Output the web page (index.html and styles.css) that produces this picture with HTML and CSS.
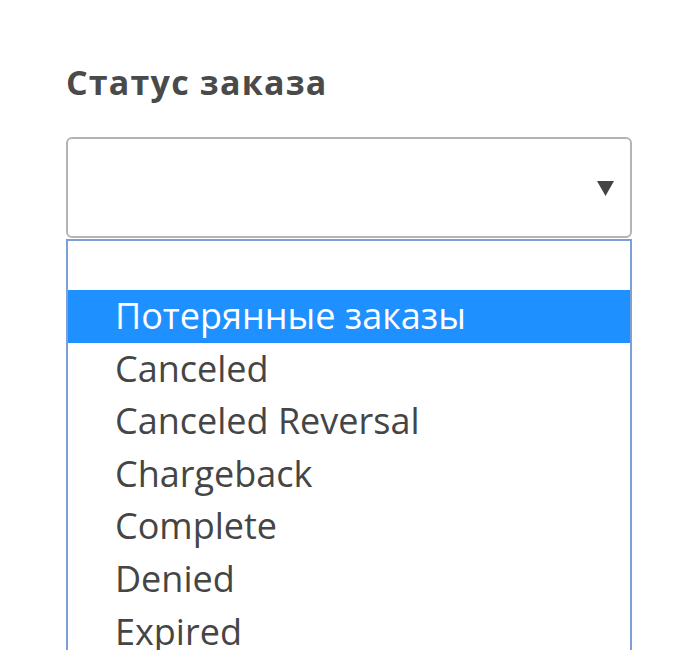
FILE: index.html
```html
<!DOCTYPE html>
<html lang="ru">
<head>
<meta charset="utf-8">
<title>Статус заказа</title>
<link rel="stylesheet" href="styles.css">
</head>
<body>
<div class="field">
  <div class="label">Статус заказа</div>
  <div class="select">
    <svg class="arrow" width="17" height="15" viewBox="0 0 17 15"><polygon points="0,0 17,0 8.5,15" fill="#444"/></svg>
  </div>
  <ul class="list">
    <li class="opt empty"></li>
    <li class="opt active">Потерянные заказы</li>
    <li class="opt">Canceled</li>
    <li class="opt">Canceled Reversal</li>
    <li class="opt">Chargeback</li>
    <li class="opt">Complete</li>
    <li class="opt">Denied</li>
    <li class="opt">Expired</li>
  </ul>
</div>
</body>
</html>
```
FILE: styles.css
```css
html, body {
  margin: 0;
  padding: 0;
  background: #fff;
  height: 650px;
  overflow: hidden;
}
.field {
  padding: 64px 0 0 66px;
  width: 566px;
}
.label {
  font-family: "Open Sans", sans-serif;
  font-weight: 700;
  font-size: 34px;
  letter-spacing: 1.2px;
  line-height: 36px;
  color: #4a4a4a;
}
.select {
  margin-top: 37px;
  height: 97px;
  border: 2px solid #b4b4b4;
  border-radius: 6px;
  display: flex;
  align-items: center;
  justify-content: flex-end;
  padding-right: 16px;
  background: #fff;
}
.arrow {
  display: block;
  margin-top: 2px;
}
.list {
  list-style: none;
  margin: 1px 0 0;
  padding: 0;
  border: 2px solid #7e9ed6;
  border-bottom: none;
}
.opt {
  font-family: "Open Sans", sans-serif;
  font-size: 36px;
  height: 52.6px;
  line-height: 52.6px;
  padding-left: 47px;
  color: #454545;
  white-space: nowrap;
}
.opt.empty {
  height: 49px;
}
.opt.active {
  background: #1e90ff;
  color: #fff;
}
```
